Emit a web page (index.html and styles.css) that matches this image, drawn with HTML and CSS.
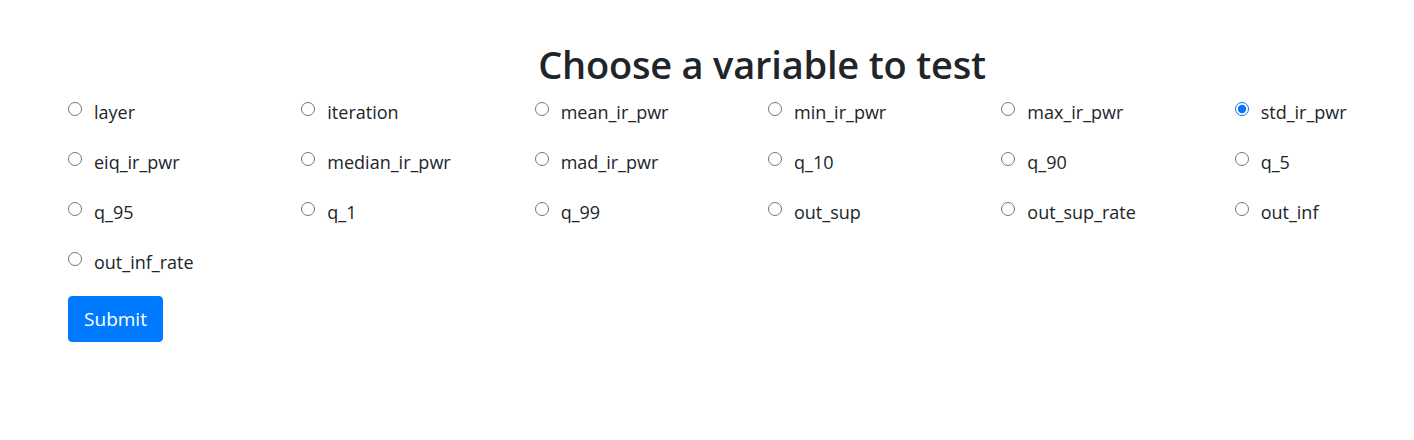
FILE: index.html
```html
<!DOCTYPE html>
<html lang="en">
<head>
<meta charset="utf-8">
<title>Choose a variable to test</title>
<link rel="stylesheet" href="styles.css">
</head>
<body>
<div class="page">
  <h1 class="title">Choose a variable to test</h1>
  <form>
    <div class="choices">
      <label class="opt"><input type="radio" name="v"><span>layer</span></label>
      <label class="opt"><input type="radio" name="v"><span>iteration</span></label>
      <label class="opt"><input type="radio" name="v"><span>mean_ir_pwr</span></label>
      <label class="opt"><input type="radio" name="v"><span>min_ir_pwr</span></label>
      <label class="opt"><input type="radio" name="v"><span>max_ir_pwr</span></label>
      <label class="opt"><input type="radio" name="v" checked><span>std_ir_pwr</span></label>
      <label class="opt"><input type="radio" name="v"><span>eiq_ir_pwr</span></label>
      <label class="opt"><input type="radio" name="v"><span>median_ir_pwr</span></label>
      <label class="opt"><input type="radio" name="v"><span>mad_ir_pwr</span></label>
      <label class="opt"><input type="radio" name="v"><span>q_10</span></label>
      <label class="opt"><input type="radio" name="v"><span>q_90</span></label>
      <label class="opt"><input type="radio" name="v"><span>q_5</span></label>
      <label class="opt"><input type="radio" name="v"><span>q_95</span></label>
      <label class="opt"><input type="radio" name="v"><span>q_1</span></label>
      <label class="opt"><input type="radio" name="v"><span>q_99</span></label>
      <label class="opt"><input type="radio" name="v"><span>out_sup</span></label>
      <label class="opt"><input type="radio" name="v"><span>out_sup_rate</span></label>
      <label class="opt"><input type="radio" name="v"><span>out_inf</span></label>
      <label class="opt"><input type="radio" name="v"><span>out_inf_rate</span></label>
    </div>
    <div class="actions"><button type="button" class="btn">Submit</button></div>
  </form>
</div>
</body>
</html>
```

FILE: styles.css
```css
html, body {
  margin: 0;
  padding: 0;
  background: #fff;
}
body {
  font-family: "Open Sans", "Noto Sans", sans-serif;
  color: #212529;
  font-size: 16px;
}
.page {
  width: 1400px;
  margin-left: 62px;
  padding-top: 40px;
}
.title {
  margin: 0;
  text-align: center;
  font-size: 38px;
  font-weight: 600;
  line-height: 48px;
  letter-spacing: -0.2px;
}
.choices {
  display: grid;
  grid-template-columns: repeat(6, 1fr);
  grid-auto-rows: 50px;
}
.opt {
  display: flex;
  align-items: flex-start;
  padding-left: 6px;
  padding-top: 11px;
  font-size: 18px;
  line-height: 26px;
}
.opt input {
  width: 14px;
  height: 14px;
  margin: 3px 12px 0 0;
  accent-color: #0b76ef;
}
.actions {
  padding-left: 6px;
  padding-top: 8px;
}
.btn {
  display: block;
  font-family: inherit;
  font-size: 19px;
  color: #fff;
  background: #007bff;
  border: 1px solid #007bff;
  border-radius: 4px;
  width: 95px;
  height: 46px;
  padding: 0;
  line-height: 44px;
}
```
